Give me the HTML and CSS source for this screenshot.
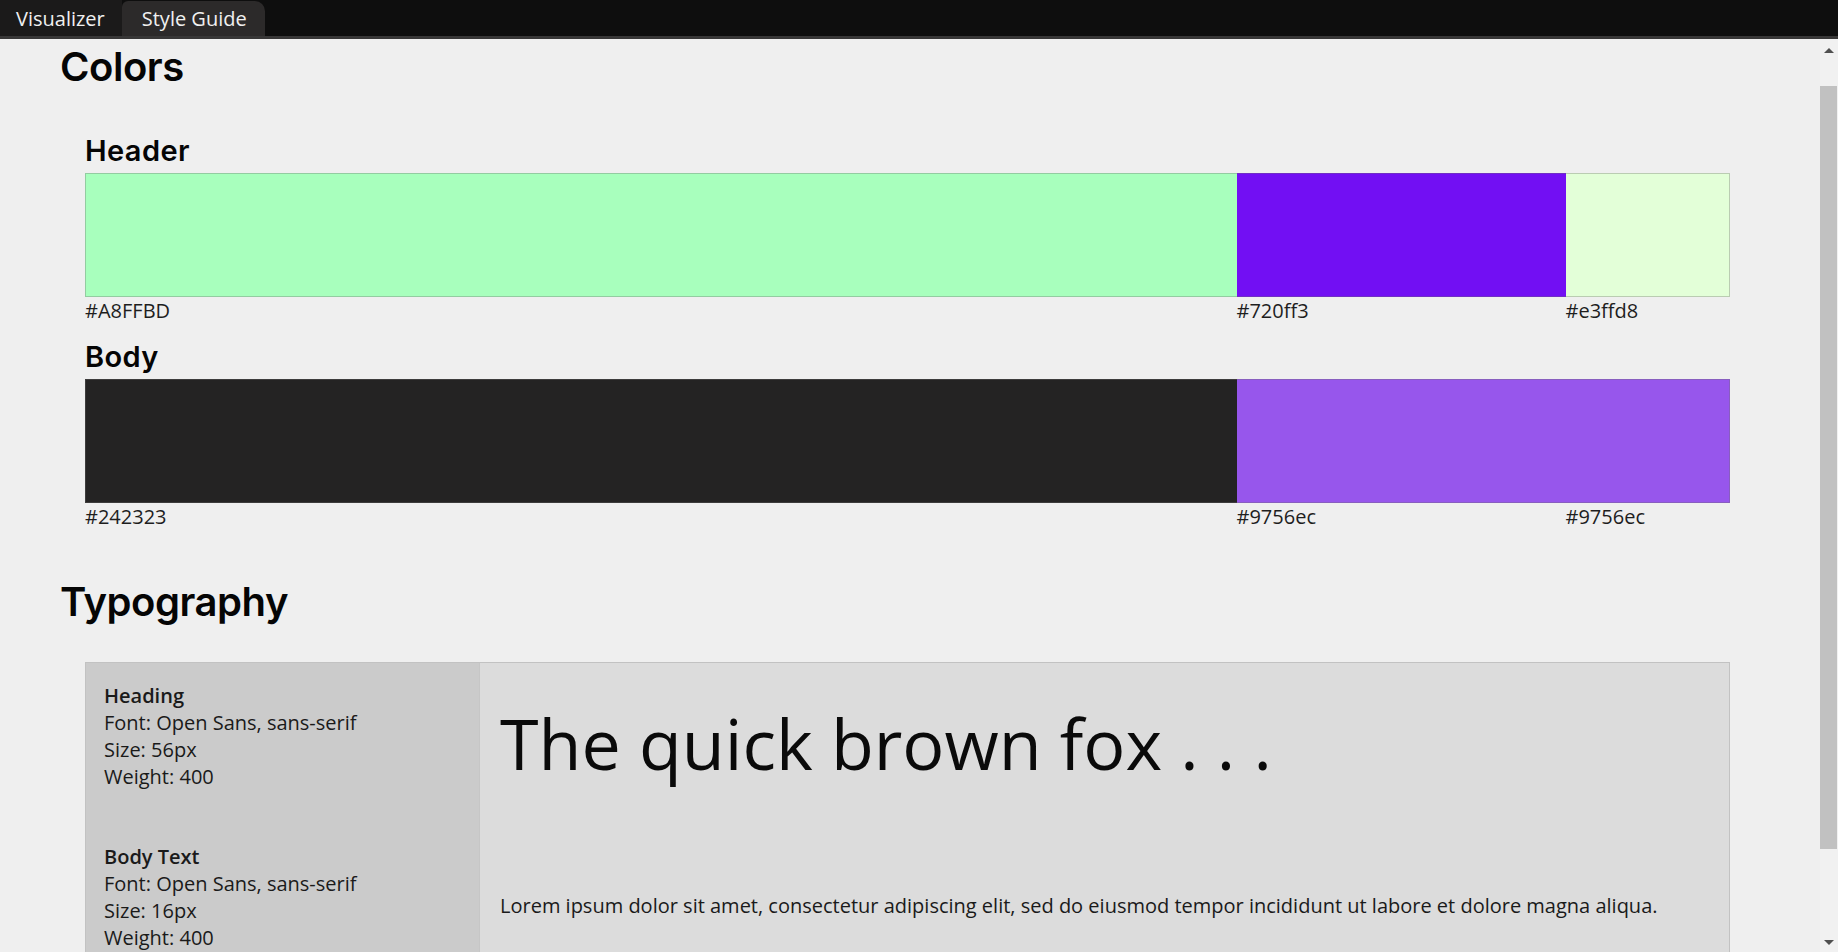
FILE: index.html
```html
<!DOCTYPE html>
<html lang="en">
<head>
<meta charset="utf-8">
<title>Style Guide</title>
<link rel="stylesheet" href="styles.css">
</head>
<body>
<header class="topbar">
  <div class="tab">Visualizer</div>
  <div class="tab tab-active">Style Guide</div>
</header>
<div class="viewport">
  <main class="main">
    <div class="page">
      <h2 class="section-title">Colors</h2>
      <div class="section-body">
        <div class="palette palette-first">
          <h3 class="palette-title">Header</h3>
          <div class="swatches">
            <div class="swatch" style="flex: 70"><div class="chip" style="background: #A8FFBD"></div><span class="code">#A8FFBD</span></div>
            <div class="swatch" style="flex: 20"><div class="chip" style="background: #720ff3"></div><span class="code">#720ff3</span></div>
            <div class="swatch" style="flex: 10"><div class="chip" style="background: #e3ffd8"></div><span class="code">#e3ffd8</span></div>
          </div>
        </div>
        <div class="palette">
          <h3 class="palette-title">Body</h3>
          <div class="swatches">
            <div class="swatch" style="flex: 70"><div class="chip" style="background: #242323"></div><span class="code">#242323</span></div>
            <div class="swatch" style="flex: 20"><div class="chip" style="background: #9756ec"></div><span class="code">#9756ec</span></div>
            <div class="swatch" style="flex: 10"><div class="chip" style="background: #9756ec"></div><span class="code">#9756ec</span></div>
          </div>
        </div>
      </div>

      <h2 class="section-title section-title-typo">Typography</h2>
      <div class="section-body">
        <div class="type-table">
          <div class="type-info">
            <div class="type-name">Heading</div>
            <div>Font: Open Sans, sans-serif</div>
            <div>Size: 56px</div>
            <div>Weight: 400</div>
          </div>
          <div class="type-sample">
            <div class="sample-heading">The quick brown fox . . .</div>
          </div>
          <div class="type-info">
            <div class="type-name">Body Text</div>
            <div>Font: Open Sans, sans-serif</div>
            <div>Size: 16px</div>
            <div>Weight: 400</div>
          </div>
          <div class="type-sample type-sample-body">
            <p class="sample-body">Lorem ipsum dolor sit amet, consectetur adipiscing elit, sed do eiusmod tempor incididunt ut labore et dolore magna aliqua.</p>
          </div>
        </div>
      </div>
    </div>
  </main>
  <div class="scrollbar" aria-hidden="true">
    <div class="sb-btn sb-btn-up"><span class="sb-arrow sb-arrow-up"></span></div>
    <div class="sb-track"><div class="sb-thumb"></div></div>
    <div class="sb-btn sb-btn-down"><span class="sb-arrow sb-arrow-down"></span></div>
  </div>
</div>
</body>
</html>
```

FILE: styles.css
```css
* { box-sizing: border-box; }

html, body {
  margin: 0;
  height: 100%;
}

body {
  display: flex;
  flex-direction: column;
  background: #efefef;
  font-family: "Open Sans", "Liberation Sans", sans-serif;
  color: #1a1a1a;
  overflow: hidden;
}

/* ---------- top bar ---------- */
.topbar {
  flex: 0 0 auto;
  display: flex;
  align-items: flex-end;
  height: 39px;
  background: #0e0e0e;
  border-bottom: 3px solid #383737;
}

.tab {
  height: 36px;
  padding: 2px 17px 0 16px;
  line-height: 34px;
  font-size: 20px;
  color: #f0f0f0;
  background: #1b1a1a;
  white-space: nowrap;
}

.tab-active {
  height: 35px;
  padding: 1px 18px 0 20px;
  background: #2c2a2a;
  border-radius: 6px 10px 0 0;
}

/* ---------- viewport with scrollbar ---------- */
.viewport {
  flex: 1 1 auto;
  display: flex;
  min-height: 0;
}

.main {
  flex: 1 1 auto;
  min-width: 0;
  overflow: hidden;
}

.scrollbar {
  flex: 0 0 18px;
  display: flex;
  flex-direction: column;
  background: #f1f1f1;
}

.sb-btn {
  flex: 0 0 17px;
  display: flex;
  justify-content: center;
}

.sb-btn-up {
  align-items: flex-start;
  padding-top: 9px;
}

.sb-btn-down {
  align-items: flex-start;
  padding-top: 5px;
}

.sb-arrow {
  width: 0;
  height: 0;
  border-left: 5px solid transparent;
  border-right: 5px solid transparent;
}

.sb-arrow-up {
  border-bottom: 5px solid #505050;
}

.sb-arrow-down {
  border-top: 5px solid #505050;
}

.sb-track {
  flex: 1 1 auto;
  padding-top: 30px;
}

.sb-thumb {
  height: 763px;
  margin-right: 1px;
  background: #c1c1c1;
}

/* ---------- page content ---------- */
.page {
  padding: 4px 90px 40px 60px;
}

.section-title {
  margin: 0;
  font-family: Inter, Lato, "Liberation Sans", sans-serif;
  font-weight: 600;
  font-size: 40px;
  line-height: 48px;
  letter-spacing: -0.45px;
  color: #050505;
}

.section-title-typo {
  margin-top: 48px;
}

.section-body {
  margin-left: 25px;
}

.palette {
  margin-top: 16px;
}

.palette-first {
  margin-top: 43px;
}

.palette-title {
  margin: 0 0 5px;
  font-family: Inter, Lato, "Liberation Sans", sans-serif;
  font-weight: 600;
  font-size: 29px;
  line-height: 34px;
  letter-spacing: 0.4px;
  color: #050505;
}

.swatches {
  display: flex;
}

.swatch {
  display: flex;
  flex-direction: column;
  min-width: 0;
}

.chip {
  height: 124px;
  border-top: 1px solid rgba(110, 110, 110, 0.35);
  border-bottom: 1px solid rgba(110, 110, 110, 0.35);
}

.swatch:first-child .chip {
  border-left: 1px solid rgba(110, 110, 110, 0.35);
}

.swatch:last-child .chip {
  border-right: 1px solid rgba(110, 110, 110, 0.35);
}

.code {
  margin-top: 0;
  font-size: 20px;
  line-height: 27px;
  color: #1e1e1e;
}

/* ---------- typography table ---------- */
.type-table {
  display: grid;
  grid-template-columns: 393px 1fr;
  margin-top: 36px;
  border: 1px solid #c2c2c2;
}

.type-info {
  padding: 19px 18px 20px;
  background: #cbcbcb;
  font-size: 20px;
  line-height: 27px;
  color: #1a1a1a;
}

.type-name {
  font-weight: 600;
}

.type-sample {
  padding: 20px 20px;
  background: #dcdcdc;
  border-left: 1px solid #c6c6c6;
}

.sample-heading {
  font-size: 70px;
  line-height: 121px;
  font-weight: 400;
  color: #0a0a0a;
  white-space: nowrap;
}

.type-sample-body {
  padding-top: 68px;
}

.sample-body {
  margin: 0;
  font-size: 20px;
  line-height: 27px;
  color: #1a1a1a;
}
```
